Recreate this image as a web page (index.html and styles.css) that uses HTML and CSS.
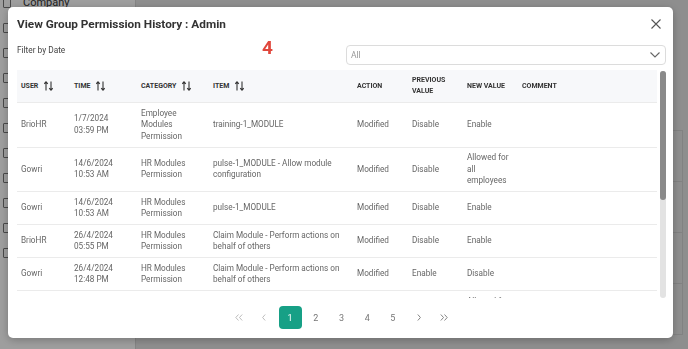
FILE: index.html
```html
<!DOCTYPE html>
<html lang="en">
<head>
    <meta charset="UTF-8">
    <meta name="viewport" content="width=device-width, initial-scale=1.0">
    <title>View Group Permission History</title>
    <link rel="stylesheet" href="styles.css">
</head>
<body>

    <div class="app">
        <aside class="sidebar">
            <div class="nav-item"><span class="nav-icon"></span><span>Company</span></div>
            <div class="nav-item"><span class="nav-icon"></span><span>People</span></div>
            <div class="nav-item"><span class="nav-icon"></span><span>Groups</span></div>
            <div class="nav-item"><span class="nav-icon"></span><span>Calendar</span></div>
            <div class="nav-item"><span class="nav-icon"></span><span>Documents</span></div>
            <div class="nav-item"><span class="nav-icon"></span><span>Reports</span></div>
            <div class="nav-item"><span class="nav-icon"></span><span>Claims</span></div>
            <div class="nav-item"><span class="nav-icon"></span><span>Leave</span></div>
            <div class="nav-item"><span class="nav-icon"></span><span>Settings</span></div>
            <div class="nav-item"><span class="nav-icon"></span><span>Payroll</span></div>
            <div class="nav-item"><span class="nav-icon"></span><span>Training</span></div>
        </aside>
        <main class="main">
            <div class="main-top"><span class="dot"></span></div>
            <div class="main-list">
                <div class="main-row"></div>
                <div class="main-row"></div>
                <div class="main-row"></div>
                <div class="main-row"></div>
            </div>
        </main>
    </div>

    <div class="backdrop"></div>

    <div class="modal">
        <div class="modal-header">
            <h2>View Group Permission History : Admin</h2>
            <button class="close-btn" aria-label="Close">
                <svg width="10" height="10" viewBox="0 0 10 10"><path d="M0.5 0.5 L9.5 9.5 M9.5 0.5 L0.5 9.5" stroke="#555" stroke-width="1.1" fill="none"/></svg>
            </button>
        </div>

        <span class="marker">4</span>

        <div class="filter-row">
            <label class="filter-label">Filter by Date</label>
            <div class="select">
                <span>All</span>
                <svg width="10" height="6" viewBox="0 0 10 6"><path d="M0.5 0.5 L5 5 L9.5 0.5" stroke="#666" stroke-width="1.1" fill="none"/></svg>
            </div>
        </div>

        <div class="table-wrap">
            <div class="table-scroll">
                <table class="history">
                    <colgroup>
                        <col class="c-user"><col class="c-time"><col class="c-cat"><col class="c-item">
                        <col class="c-action"><col class="c-prev"><col class="c-new"><col class="c-comment">
                    </colgroup>
                    <thead>
                        <tr>
                            <th>User <svg class="sort" width="9" height="10" viewBox="0 0 9 10"><path d="M2 9.5 V0.8 M0.2 2.8 L2 0.8 L3.8 2.8 M7 0.5 V9.2 M5.2 7.2 L7 9.2 L8.8 7.2" stroke="#333" stroke-width="1.1" fill="none"/></svg></th>
                            <th>Time <svg class="sort" width="9" height="10" viewBox="0 0 9 10"><path d="M2 9.5 V0.8 M0.2 2.8 L2 0.8 L3.8 2.8 M7 0.5 V9.2 M5.2 7.2 L7 9.2 L8.8 7.2" stroke="#333" stroke-width="1.1" fill="none"/></svg></th>
                            <th>Category <svg class="sort" width="9" height="10" viewBox="0 0 9 10"><path d="M2 9.5 V0.8 M0.2 2.8 L2 0.8 L3.8 2.8 M7 0.5 V9.2 M5.2 7.2 L7 9.2 L8.8 7.2" stroke="#333" stroke-width="1.1" fill="none"/></svg></th>
                            <th>Item <svg class="sort" width="9" height="10" viewBox="0 0 9 10"><path d="M2 9.5 V0.8 M0.2 2.8 L2 0.8 L3.8 2.8 M7 0.5 V9.2 M5.2 7.2 L7 9.2 L8.8 7.2" stroke="#333" stroke-width="1.1" fill="none"/></svg></th>
                            <th>Action</th>
                            <th>Previous<br>Value</th>
                            <th>New Value</th>
                            <th>Comment</th>
                        </tr>
                    </thead>
                    <tbody>
                        <tr>
                            <td>BrioHR</td><td>1/7/2024<br>03:59 PM</td><td>Employee Modules Permission</td><td>training-1_MODULE</td>
                            <td>Modified</td><td>Disable</td><td>Enable</td><td></td>
                        </tr>
                        <tr>
                            <td>Gowri</td><td>14/6/2024<br>10:53 AM</td><td>HR Modules Permission</td><td>pulse-1_MODULE - Allow module configuration</td>
                            <td>Modified</td><td>Disable</td><td>Allowed for all employees</td><td></td>
                        </tr>
                        <tr>
                            <td>Gowri</td><td>14/6/2024<br>10:53 AM</td><td>HR Modules Permission</td><td>pulse-1_MODULE</td>
                            <td>Modified</td><td>Disable</td><td>Enable</td><td></td>
                        </tr>
                        <tr>
                            <td>BrioHR</td><td>26/4/2024<br>05:55 PM</td><td>HR Modules Permission</td><td>Claim Module - Perform actions on behalf of others</td>
                            <td>Modified</td><td>Disable</td><td>Enable</td><td></td>
                        </tr>
                        <tr>
                            <td>Gowri</td><td>26/4/2024<br>12:48 PM</td><td>HR Modules Permission</td><td>Claim Module - Perform actions on behalf of others</td>
                            <td>Modified</td><td>Enable</td><td>Disable</td><td></td>
                        </tr>
                        <tr>
                            <td>Gowri</td><td>26/4/2024<br>12:47 PM</td><td>HR Modules Permission</td><td>Claim Module - Allow module configuration</td>
                            <td>Modified</td><td>Disable</td><td>Allowed for all employees</td><td></td>
                        </tr>
                        <tr>
                            <td>Gowri</td><td>26/4/2024<br>12:45 PM</td><td>HR Modules Permission</td><td>claim-1_MODULE</td>
                            <td>Modified</td><td>Disable</td><td>Enable</td><td></td>
                        </tr>
                        <tr>
                            <td>BrioHR</td><td>12/3/2024<br>09:12 AM</td><td>Employee Modules Permission</td><td>leave-1_MODULE</td>
                            <td>Modified</td><td>Enable</td><td>Disable</td><td></td>
                        </tr>
                    </tbody>
                </table>
            </div>
            <div class="scrollbar"><div class="thumb"></div></div>
        </div>

        <nav class="pagination">
            <span class="page disabled"><svg width="8" height="7" viewBox="0 0 8 7"><path d="M3.5 0.5 L0.8 3.5 L3.5 6.5 M7.2 0.5 L4.5 3.5 L7.2 6.5" stroke="currentColor" stroke-width="0.9" fill="none"/></svg></span>
            <span class="page disabled"><svg width="4" height="7" viewBox="0 0 4 7"><path d="M3.2 0.5 L0.6 3.5 L3.2 6.5" stroke="currentColor" stroke-width="0.9" fill="none"/></svg></span>
            <span class="page active">1</span>
            <span class="page">2</span>
            <span class="page">3</span>
            <span class="page">4</span>
            <span class="page">5</span>
            <span class="page"><svg width="4" height="7" viewBox="0 0 4 7"><path d="M0.8 0.5 L3.4 3.5 L0.8 6.5" stroke="currentColor" stroke-width="0.9" fill="none"/></svg></span>
            <span class="page"><svg width="8" height="7" viewBox="0 0 8 7"><path d="M0.8 0.5 L3.5 3.5 L0.8 6.5 M4.5 0.5 L7.2 3.5 L4.5 6.5" stroke="currentColor" stroke-width="0.9" fill="none"/></svg></span>
        </nav>
    </div>

</body>
</html>
```

FILE: styles.css
```css
html, body {
    margin: 0;
    padding: 0;
    height: 100%;
    overflow: hidden;
    font-family: Roboto, "Liberation Sans", Arial, sans-serif;
}
.app {
    display: flex;
    height: 100vh;
}
.sidebar {
    width: 135px;
    background: #ffffff;
    border-right: 1px solid #d6d6d6;
}
.nav-item {
    display: flex;
    align-items: center;
    gap: 12px;
    height: 25px;
    padding-left: 3px;
    font-size: 11px;
    color: #333;
}
.nav-item:first-child {
    margin-top: -10px;
}
.nav-icon {
    width: 6px;
    height: 8px;
    border: 1.5px solid #777;
    border-radius: 1px;
}
.main {
    flex: 1;
    background: #e6e6e6;
}
.main-top {
    height: 130px;
    padding-left: 14px;
}
.dot {
    display: inline-block;
    width: 2px;
    height: 2px;
    margin-top: 4px;
    background: #222;
}
.main-list {
    border-top: 1px solid #d2d2d2;
    margin-right: 5px;
    border-right: 1px solid #d2d2d2;
}
.main-row {
    height: 50px;
    border-bottom: 1px solid #d2d2d2;
}
.backdrop {
    position: fixed;
    inset: 0;
    background: rgba(0, 0, 0, 0.38);
}
.modal {
    position: fixed;
    left: 8px;
    top: 7px;
    width: 665px;
    height: 331px;
    box-sizing: border-box;
    background: #fff;
    border-radius: 5px;
    box-shadow: 0 2px 8px rgba(0, 0, 0, 0.25);
    padding: 0 7px 0 9px;
    display: flex;
    flex-direction: column;
}
.modal-header {
    display: flex;
    justify-content: space-between;
    align-items: center;
    height: 34px;
}
.modal-header h2 {
    margin: 0;
    font-size: 11.8px;
    font-weight: 700;
    color: #333;
}
.close-btn {
    border: none;
    background: none;
    padding: 0;
    margin-right: 5px;
    display: flex;
}
.marker {
    position: absolute;
    left: 254px;
    top: 29px;
    font-size: 19px;
    font-weight: 700;
    color: #e0473c;
}
.filter-row {
    display: flex;
    justify-content: space-between;
    align-items: flex-start;
    margin-top: 4px;
}
.filter-label {
    font-size: 8.3px;
    color: #444;
    line-height: 10px;
}
.select {
    width: 320px;
    height: 20px;
    box-sizing: border-box;
    border: 1px solid #dcdcdc;
    border-radius: 4px;
    display: flex;
    align-items: center;
    justify-content: space-between;
    padding: 0 5px 0 4px;
    font-size: 8.5px;
    color: #999;
}
.table-wrap {
    margin-top: 5px;
    height: 228px;
    display: flex;
    gap: 3px;
}
.table-scroll {
    flex: 1;
    overflow: hidden;
}
.scrollbar {
    width: 6px;
    margin-top: 1px;
    background: #e3e3e3;
    border-radius: 3px;
}
.thumb {
    height: 129px;
    background: #8a8a8a;
    border-radius: 3px;
}
.history {
    width: 640px;
    border-collapse: collapse;
    table-layout: fixed;
}
.c-user { width: 53px; }
.c-time { width: 67px; }
.c-cat { width: 72px; }
.c-item { width: 144px; }
.c-action { width: 55px; }
.c-prev { width: 55px; }
.c-new { width: 55px; }
.c-comment { width: 139px; }
.history th {
    background: #f7f8fa;
    text-align: left;
    font-size: 7px;
    font-weight: 700;
    text-transform: uppercase;
    color: #333;
    line-height: 11px;
    padding: 5px 4px;
    height: 22px;
}
.sort {
    vertical-align: middle;
    margin-left: 4px;
}
.history td {
    font-size: 8.2px;
    color: #666;
    line-height: 11.5px;
    padding: 4.5px 4px;
    border-top: 1px solid #ebebeb;
    vertical-align: middle;
}
.pagination {
    display: flex;
    justify-content: center;
    gap: 2.7px;
    padding-top: 8px;
}
.page {
    width: 23px;
    height: 23px;
    display: flex;
    align-items: center;
    justify-content: center;
    font-size: 9px;
    color: #777;
    border-radius: 4px;
}
.page.disabled {
    color: #b5b5b5;
}
.page.active {
    background: #17a086;
    color: #fff;
}
```
